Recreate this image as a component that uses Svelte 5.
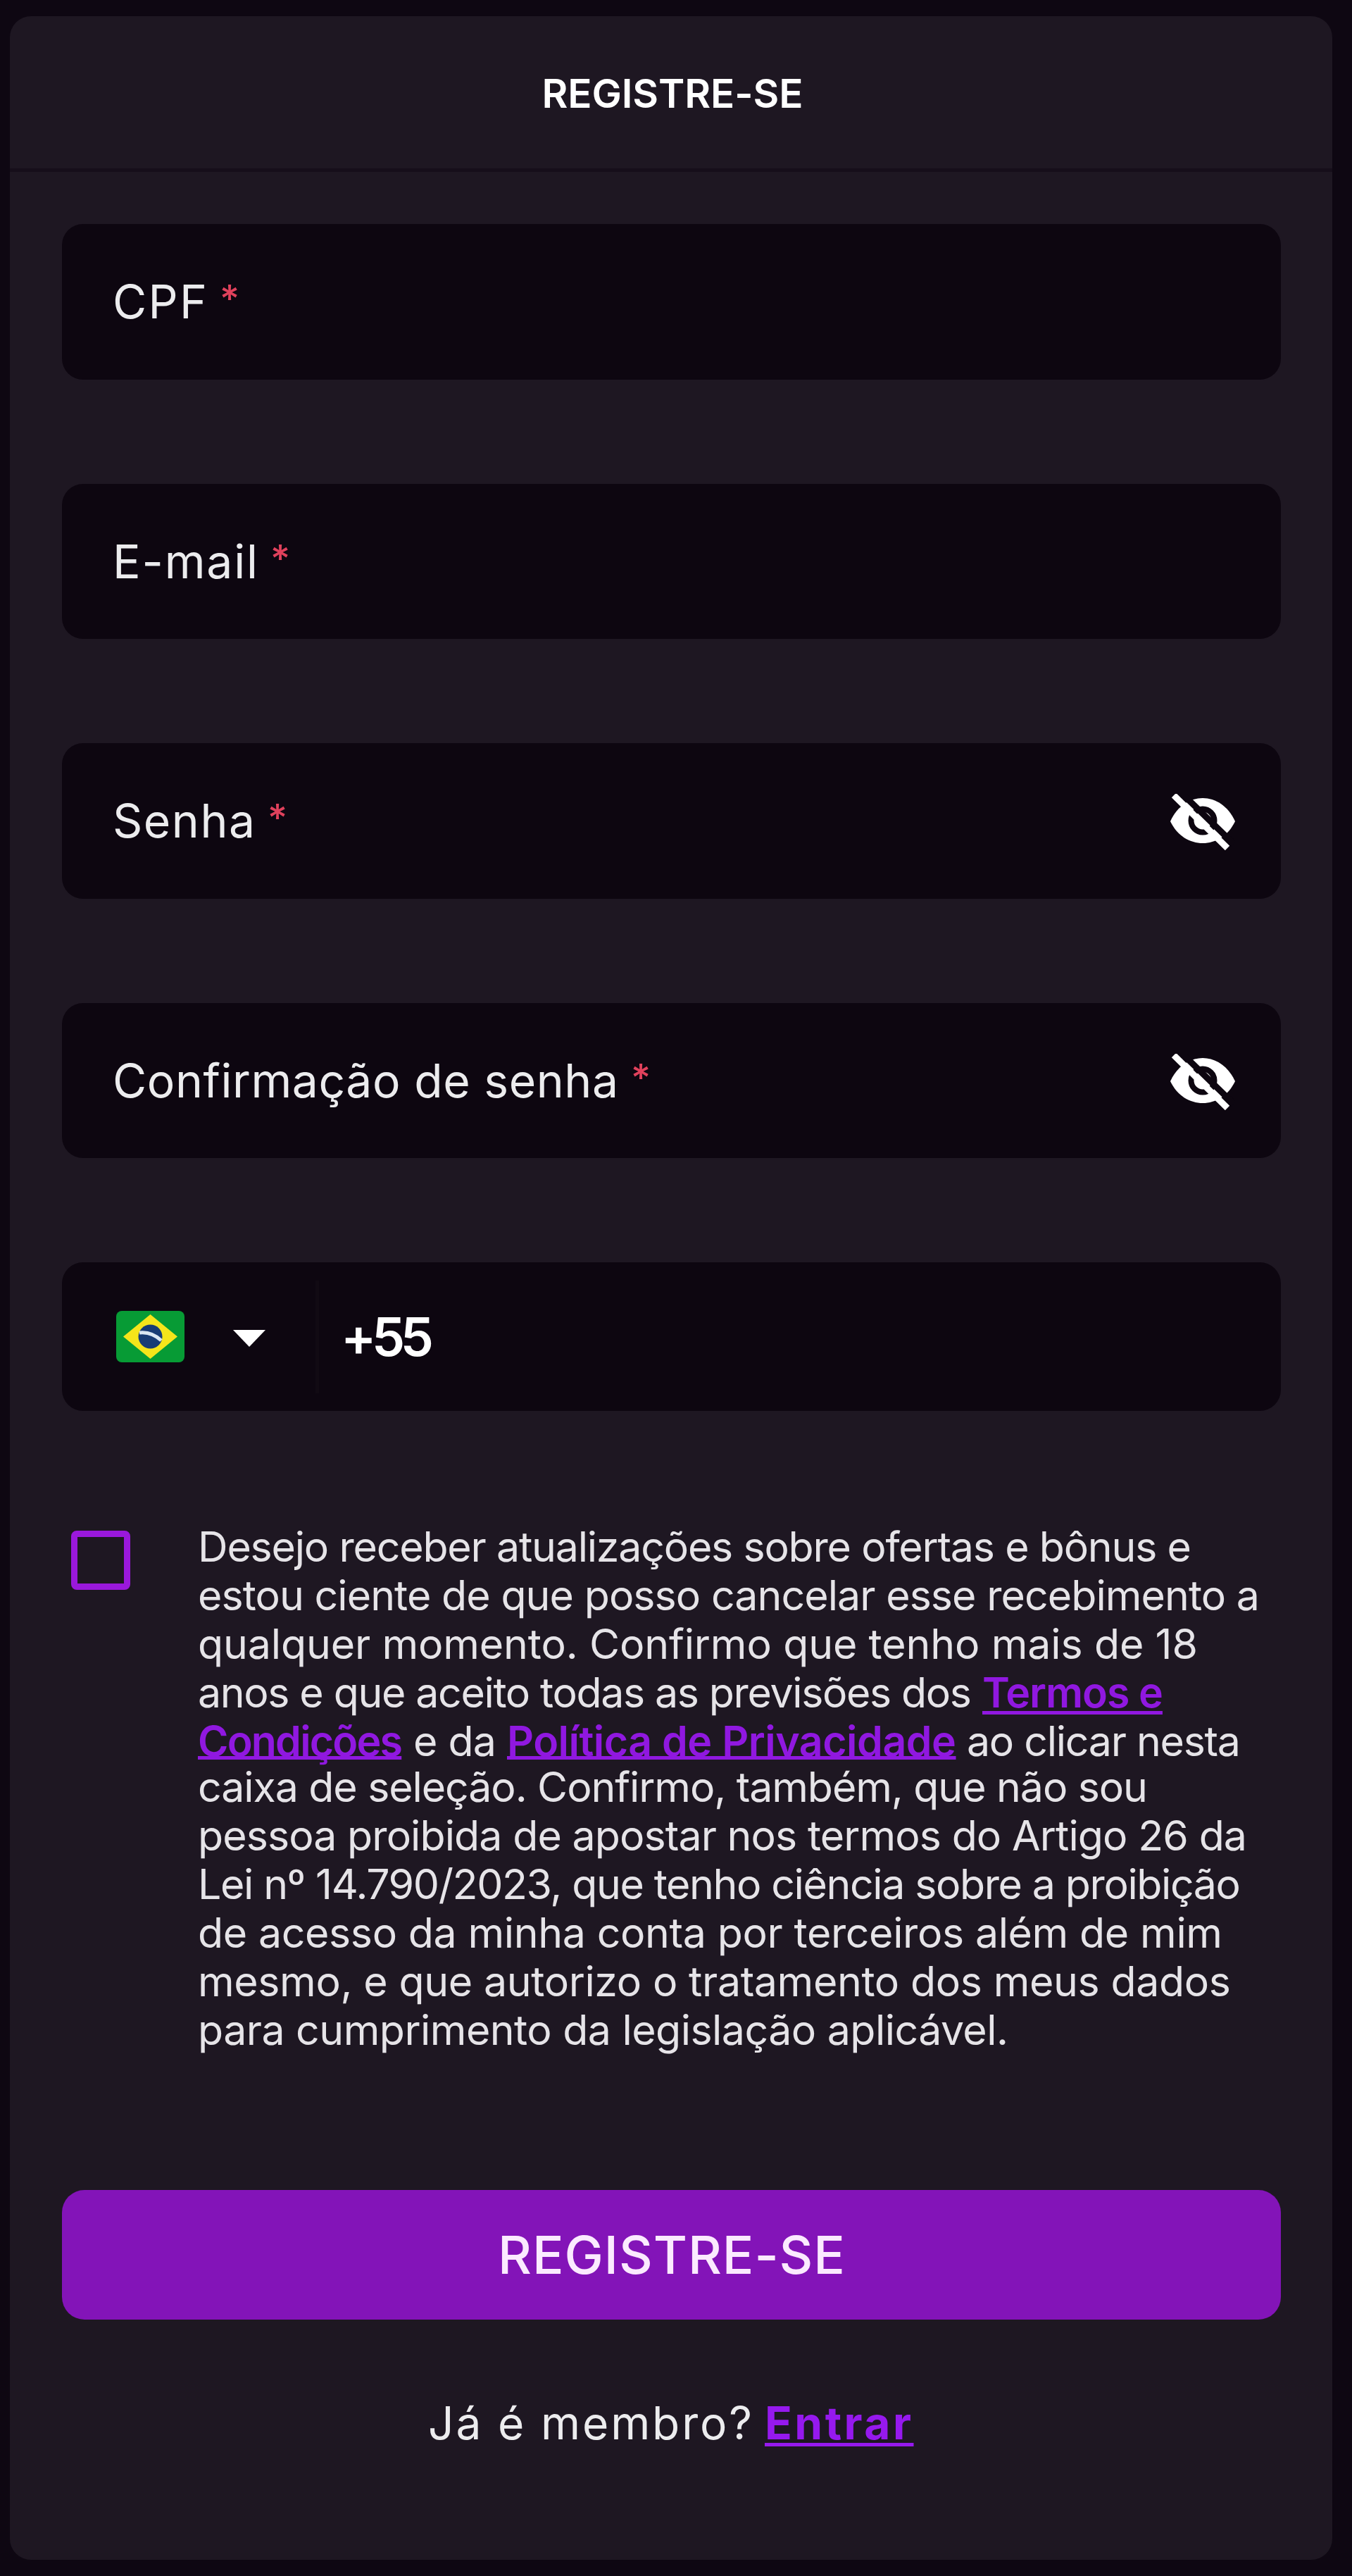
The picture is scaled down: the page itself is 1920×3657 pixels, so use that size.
<script>
  const fields = [
    { label: 'CPF', width: 134 },
    { label: 'E-mail', width: 206 },
    { label: 'Senha', width: 202, secret: true },
    { label: 'Confirmação de senha', width: 718, secret: true },
  ];

  const consent = [
    [{ text: 'Desejo receber atualizações sobre ofertas e bônus e', width: 1411 }],
    [{ text: 'estou ciente de que posso cancelar esse recebimento a', width: 1508 }],
    [{ text: 'qualquer momento. Confirmo que tenho mais de 18', width: 1420 }],
    [
      { text: 'anos e que aceito todas as previsões dos', width: 1099 },
      { text: 'Termos e', width: 257, link: true },
    ],
    [
      { text: 'Condições', width: 291, link: true },
      { text: 'e da', width: 118 },
      { text: 'Política de Privacidade', width: 638, link: true },
      { text: 'ao clicar nesta', width: 389 },
    ],
    [{ text: 'caixa de seleção. Confirmo, também, que não sou', width: 1349 }],
    [{ text: 'pessoa proibida de apostar nos termos do Artigo 26 da', width: 1490 }],
    [{ text: 'Lei nº 14.790/2023, que tenho ciência sobre a proibição', width: 1481 }],
    [{ text: 'de acesso da minha conta por terceiros além de mim', width: 1455 }],
    [{ text: 'mesmo, e que autorizo o tratamento dos meus dados', width: 1467 }],
    [{ text: 'para cumprimento da legislação aplicável.', width: 1151 }],
  ];

  // Tracks the text in or out until it fills the given measure.
  function fit(node, width) {
    const natural = node.getBoundingClientRect().width;
    const gaps = node.textContent.length - 1;
    const spacing = (width - natural) / gaps;
    node.style.letterSpacing = `${spacing}px`;
    node.style.marginRight = `${-spacing}px`;
  }
</script>

<main class="page">
  <section class="card">
    <header class="head"><h1 class="fit" use:fit={371}>REGISTRE-SE</h1></header>

    <form class="form">
      {#each fields as field}
        <label class="field">
          <span class="label fit" use:fit={field.width}>{field.label}</span>
          <span class="star">*</span>
          {#if field.secret}
            <svg class="eye" viewBox="22 22 92 80" aria-hidden="true">
              <path d="M22 61C32 39 50 28 68 28s36 11 46 33c-10 21-28 31-46 31S32 82 22 61Z" fill="#fff" />
              <circle cx="68" cy="60" r="16.5" fill="none" stroke="#0d0610" stroke-width="8" />
              <path d="M34 17l78 76" stroke="#0d0610" stroke-width="9" />
              <path d="M27 24l76 75" stroke="#fff" stroke-width="9" />
            </svg>
          {/if}
        </label>
      {/each}

      <div class="phone">
        <svg class="flag" viewBox="0 0 97 73" aria-hidden="true">
          <rect width="97" height="73" rx="8" fill="#079b35" />
          <path d="M48.500 5L87 36.500 48.500 68 10 36.500Z" fill="#f5e51b" />
          <circle cx="48.500" cy="36.500" r="17" fill="#173c75" />
          <path d="M33 31q17-2 31 11" fill="none" stroke="#d9e6f2" stroke-width="5" />
        </svg>
        <svg class="arrow" viewBox="0 0 46 24" aria-hidden="true"><path d="M0 0h46L23 24Z" fill="#fff" /></svg>
        <span class="rule"></span>
        <span class="code fit" use:fit={132}>+55</span>
      </div>

      <div class="consent">
        <span class="box"></span>
        <div class="lines">
          {#each consent as line}
            <div class="line">
              {#each line as part}
                {#if part.link}
                  <span class="cell"><a class="link fit" href="#termos" use:fit={part.width}>{part.text}</a></span>
                {:else}
                  <span class="cell"><span class="fit" use:fit={part.width}>{part.text}</span></span>
                {/if}
              {/each}
            </div>
          {/each}
        </div>
      </div>

      <button class="submit" type="button"><span class="fit" use:fit={493}>REGISTRE-SE</span></button>
    </form>

    <footer class="foot">
      <span class="fit" use:fit={460}>Já é membro?</span>
      <a class="login fit" href="#entrar" use:fit={208}>Entrar</a>
    </footer>
  </section>
</main>

<style>
  :global(body) {
    background: #0e0712;
  }

  .page {
    box-sizing: border-box;
    height: 3657px;
    padding: 23px 28px 23px 14px;
    background: #0e0712;
    color: #ececee;
    font-family: Inter, "Open Sans", sans-serif;
  }

  .card {
    box-sizing: border-box;
    height: 3611px;
    border-radius: 30px;
    background: #1e1722;
  }

  .fit {
    display: inline-block;
    white-space: nowrap;
  }

  .head {
    display: flex;
    align-items: center;
    justify-content: center;
    box-sizing: border-box;
    height: 221px;
    padding-left: 4px;
    padding-top: 4px;
    border-bottom: 5px solid #160e1a;
  }

  h1 {
    margin: 0;
    font-size: 56.6px;
    font-weight: 600;
    line-height: 1.2;
    color: #fff;
  }

  .form {
    display: flex;
    flex-direction: column;
    padding: 74px 73px 0 74px;
  }

  .field {
    display: flex;
    align-items: center;
    box-sizing: border-box;
    height: 220.500px;
    margin-bottom: 148px;
    padding: 0 65px 0 72px;
    border-radius: 30px;
    background: #0d0610;
    font-size: 66px;
    line-height: 80px;
  }

  .star {
    margin-left: 18px;
    font-size: 54px;
    font-weight: 500;
    line-height: 80px;
    padding-bottom: 8px;
    color: #e0415c;
  }

  .eye {
    width: 92px;
    height: 80px;
    margin-top: 4px;
    margin-left: auto;
  }

  .phone {
    display: flex;
    align-items: center;
    box-sizing: border-box;
    height: 211px;
    padding-left: 77px;
    border-radius: 30px;
    background: #0d0610;
  }

  .flag {
    width: 97px;
    height: 73px;
  }

  .arrow {
    width: 46px;
    height: 24px;
    margin: 4px 71px 0 69px;
  }

  .rule {
    width: 5px;
    height: 160px;
    background: #110a13;
  }

  .code {
    margin-left: 31px;
    font-size: 75px;
    font-weight: 600;
    line-height: 90px;
    color: #fff;
  }

  .consent {
    display: flex;
    align-items: flex-start;
    margin-top: 156px;
    padding-left: 13px;
  }

  .box {
    box-sizing: border-box;
    width: 84px;
    height: 84px;
    margin-top: 14px;
    border: 9px solid #9a18dc;
    border-radius: 8px;
  }

  .lines {
    margin-top: 2px;
    margin-left: 96px;
    font-size: 59px;
    line-height: 69px;
    color: #e6e4e8;
  }

  .line {
    display: flex;
    gap: 15px;
    height: 69px;
  }

  .line:nth-child(5) {
    box-sizing: border-box;
    height: 64.500px;
    padding-top: 4.500px;
    line-height: 60px;
  }

  .link {
    color: #9018e0;
    font-weight: 600;
    text-decoration: underline;
    text-decoration-thickness: 5px;
    text-decoration-skip-ink: none;
    text-underline-offset: 5px;
  }

  .line:nth-child(5) .link {
    text-underline-offset: 0;
  }

  .submit {
    height: 184px;
    margin-top: 193px;
    padding: 0;
    border: 0;
    border-radius: 32px;
    background: #8314b8;
    color: #fbeaff;
    font-family: inherit;
    font-size: 74px;
    font-weight: 500;
    line-height: 90px;
  }

  .foot {
    display: flex;
    justify-content: center;
    gap: 18px;
    margin-top: 107px;
    padding-right: 4px;
    font-size: 64px;
    line-height: 80px;
  }

  .login {
    color: #9619ee;
    font-weight: 700;
    text-decoration: underline;
    text-decoration-thickness: 5px;
    text-underline-offset: 5px;
  }
</style>
